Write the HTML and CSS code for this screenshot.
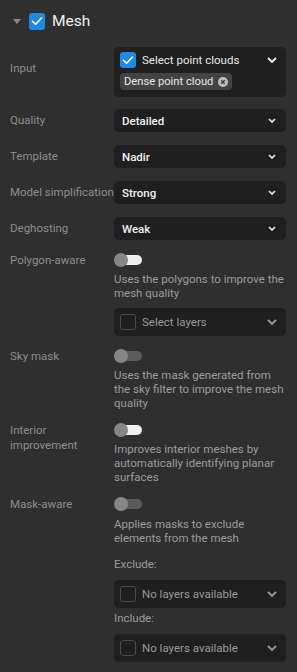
FILE: index.html
```html
<!DOCTYPE html>
<html>
<head>
<meta charset="utf-8">
<link rel="stylesheet" href="styles.css">
</head>
<body>
<div class="panel">
  <div class="header">
    <span class="caret"></span>
    <span class="cb cb-on cb-lg"><svg viewBox="0 0 16 16" width="16" height="16"><path d="M3.5 8.3 L6.6 11.2 L12.5 5" fill="none" stroke="#fff" stroke-width="1.6" stroke-linecap="round" stroke-linejoin="round"/></svg></span>
    <span class="title">Mesh</span>
  </div>

  <div class="form">
    <div class="label lbl-input">Input</div>
    <div class="multi">
      <div class="multi-top">
        <span class="cb cb-on"><svg viewBox="0 0 16 16" width="16" height="16"><path d="M3.5 8.3 L6.6 11.2 L12.5 5" fill="none" stroke="#fff" stroke-width="1.6" stroke-linecap="round" stroke-linejoin="round"/></svg></span>
        <span class="multi-text">Select point clouds</span>
        <svg class="chev chev-lg" viewBox="0 0 10 6" width="10" height="6"><path d="M1 1 L5 5 L9 1" fill="none" stroke="#eee" stroke-width="1.8"/></svg>
      </div>
      <div class="chip">Dense point cloud <svg class="chip-x" viewBox="0 0 10 10" width="10" height="10"><circle cx="5" cy="5" r="5" fill="#bdbdbd"/><path d="M3.3 3.3 L6.7 6.7 M6.7 3.3 L3.3 6.7" stroke="#3a3a3a" stroke-width="1.3"/></svg></div>
    </div>

    <div class="label">Quality</div>
    <div class="select"><span>Detailed</span><svg class="chev" viewBox="0 0 8 5" width="8" height="5"><path d="M1 1 L4 4 L7 1" fill="none" stroke="#eee" stroke-width="1.6"/></svg></div>

    <div class="label">Template</div>
    <div class="select"><span>Nadir</span><svg class="chev" viewBox="0 0 8 5" width="8" height="5"><path d="M1 1 L4 4 L7 1" fill="none" stroke="#eee" stroke-width="1.6"/></svg></div>

    <div class="label nowrap">Model simplification</div>
    <div class="select"><span>Strong</span><svg class="chev" viewBox="0 0 8 5" width="8" height="5"><path d="M1 1 L4 4 L7 1" fill="none" stroke="#eee" stroke-width="1.6"/></svg></div>

    <div class="label">Deghosting</div>
    <div class="select"><span>Weak</span><svg class="chev" viewBox="0 0 8 5" width="8" height="5"><path d="M1 1 L4 4 L7 1" fill="none" stroke="#eee" stroke-width="1.6"/></svg></div>

    <div class="label lbl-toggle">Polygon-aware</div>
    <div class="stack">
      <span class="toggle toggle-light"><span class="knob"></span></span>
      <p class="desc">Uses the polygons to improve the mesh quality</p>
      <div class="layers"><span class="cb cb-off"></span><span class="layers-text">Select layers</span><svg class="chev chev-lg" viewBox="0 0 10 6" width="10" height="6"><path d="M1 1 L5 5 L9 1" fill="none" stroke="#999" stroke-width="1.8"/></svg></div>
    </div>

    <div class="label lbl-toggle">Sky mask</div>
    <div class="stack">
      <span class="toggle"><span class="knob"></span></span>
      <p class="desc">Uses the mask generated from the sky filter to improve the mesh quality</p>
    </div>

    <div class="label lbl-toggle">Interior improvement</div>
    <div class="stack">
      <span class="toggle toggle-light"><span class="knob"></span></span>
      <p class="desc">Improves interior meshes by automatically identifying planar surfaces</p>
    </div>

    <div class="label lbl-toggle">Mask-aware</div>
    <div class="stack">
      <span class="toggle"><span class="knob"></span></span>
      <p class="desc desc-mask">Applies masks to exclude elements from the mesh</p>
      <div class="sub">Exclude:</div>
      <div class="layers"><span class="cb cb-off"></span><span class="layers-text">No layers available</span><svg class="chev chev-lg" viewBox="0 0 10 6" width="10" height="6"><path d="M1 1 L5 5 L9 1" fill="none" stroke="#999" stroke-width="1.8"/></svg></div>
      <div class="sub sub2">Include:</div>
      <div class="layers"><span class="cb cb-off"></span><span class="layers-text">No layers available</span><svg class="chev chev-lg" viewBox="0 0 10 6" width="10" height="6"><path d="M1 1 L5 5 L9 1" fill="none" stroke="#999" stroke-width="1.8"/></svg></div>
    </div>
  </div>
</div>
</body>
</html>
```

FILE: styles.css
```css
* { box-sizing: border-box; }
html, body {
  margin: 0;
  padding: 0;
  background: #2f2f2f;
  font-family: Roboto, "Noto Sans", sans-serif;
  font-size: 11.5px;
  color: #e6e6e6;
}
.panel {
  padding: 0 11px 12px 10px;
}
.header {
  height: 42px;
  display: flex;
  align-items: center;
  padding-left: 3px;
}
.caret {
  width: 0;
  height: 0;
  border-left: 4.5px solid transparent;
  border-right: 4.5px solid transparent;
  border-top: 5px solid #8a8a8a;
  margin-right: 8px;
  margin-top: 1px;
}
.cb {
  display: inline-flex;
  align-items: center;
  justify-content: center;
  width: 16px;
  height: 16px;
  border-radius: 3px;
  flex: none;
}
.cb-on { background: #1e88e5; }
.cb-lg { width: 16px; height: 17px; }
.cb-off { border: 1.5px solid #4a4a4a; background: transparent; }
.title {
  font-size: 15.5px;
  color: #f0f0f0;
  margin-left: 7px;
}
.form {
  display: grid;
  grid-template-columns: 104px 172px;
  row-gap: 13px;
  margin-top: 5px;
}
.label {
  color: #8e8e8e;
  align-self: center;
  line-height: 15px;
}
.nowrap { white-space: nowrap; }
.lbl-input { margin-top: -6px; }
.lbl-toggle { align-self: start; margin-top: 0; padding-top: 0; }
.multi {
  background: #1f1f1f;
  border-radius: 5px;
  height: 50px;
  padding: 5px 9px 0 6px;
  margin-bottom: -1px;
}
.multi-top {
  display: flex;
  align-items: center;
  height: 16px;
}
.multi-text {
  flex: 1;
  margin-left: 6px;
  color: #e8e8e8;
}
.chev { flex: none; }
.chip {
  display: inline-flex;
  align-items: center;
  gap: 5px;
  margin-top: 5px;
  height: 17px;
  padding: 0 4px 0 4px;
  border-radius: 4px;
  background: #434343;
  color: #e8e8e8;
  font-size: 11.2px;
}
.chip-x { flex: none; }
.select {
  height: 23px;
  background: #1f1f1f;
  border-radius: 5px;
  display: flex;
  align-items: center;
  justify-content: space-between;
  padding: 0 10px 0 8px;
  color: #f2f2f2;
  font-weight: 500;
}
.stack {
  display: flex;
  flex-direction: column;
  align-items: flex-start;
}
.toggle {
  position: relative;
  width: 28px;
  height: 14px;
  display: block;
}
.toggle::before {
  content: "";
  position: absolute;
  left: 4px;
  top: 2px;
  width: 24px;
  height: 10px;
  border-radius: 5px;
  background: #5c5c5c;
}
.toggle-light::before { background: #efefef; }
.knob {
  position: absolute;
  left: 0;
  top: 0;
  width: 14px;
  height: 14px;
  border-radius: 50%;
  background: #868686;
}
.desc {
  margin: 5px 0 0 0;
  color: #9c9c9c;
  line-height: 14px;
}
.desc-mask { margin-top: 7px; line-height: 13.5px; }
.layers {
  align-self: stretch;
  margin-top: 8px;
  height: 28px;
  background: #1f1f1f;
  border-radius: 5px;
  display: flex;
  align-items: center;
  padding: 0 9px 0 6px;
}
.layers-text {
  flex: 1;
  margin-left: 6px;
  color: #9a9a9a;
}
.sub {
  color: #9c9c9c;
  margin-top: 12px;
  line-height: 14px;
}
.sub2 { margin-top: 3px; }
.sub + .layers { margin-top: 9px; }
```
